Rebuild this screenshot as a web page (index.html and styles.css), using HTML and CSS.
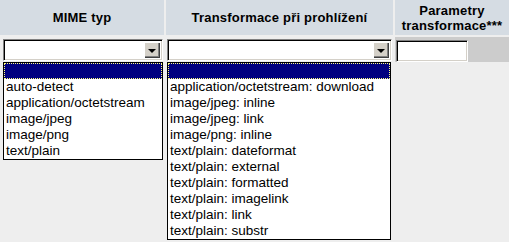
FILE: index.html
```html
<!DOCTYPE html>
<html lang="cs">
<head>
  <meta charset="UTF-8" />
  <title>Transformace</title>
  <link rel="stylesheet" href="styles.css">
</head>
<body>
  <div class="grid">
    <div class="head">MIME typ</div>
    <div class="head">Transformace při prohlížení</div>
    <div class="head two">Parametry<br />transformace***</div>

    <div class="cell">
      <div class="combo mime">
        <div class="field"></div>
        <div class="arrow"><span></span></div>
      </div>
    </div>
    <div class="cell mid">
      <div class="combo trans">
        <div class="field"></div>
        <div class="arrow"><span></span></div>
      </div>
    </div>
    <div class="cell alt">
      <input class="param" type="text" />
    </div>

    <ul class="droplist mime-list">
      <li class="sel"></li>
      <li>auto-detect</li>
      <li>application/octetstream</li>
      <li>image/jpeg</li>
      <li>image/png</li>
      <li>text/plain</li>
    </ul>
    <ul class="droplist trans-list">
      <li class="sel"></li>
      <li>application/octetstream: download</li>
      <li>image/jpeg: inline</li>
      <li>image/jpeg: link</li>
      <li>image/png: inline</li>
      <li>text/plain: dateformat</li>
      <li>text/plain: external</li>
      <li>text/plain: formatted</li>
      <li>text/plain: imagelink</li>
      <li>text/plain: link</li>
      <li>text/plain: substr</li>
    </ul>
  </div>
</body>
</html>
```

FILE: styles.css
```css
body {
  margin: 0;
  background-color: #eeeeee;
  font-family: "Liberation Sans", Arial, sans-serif;
  font-size: 13px;
  color: #000;
}
.grid {
  display: grid;
  grid-template-columns: 164px 227px 114px;
  grid-template-rows: 37px 25px auto;
  column-gap: 2px;
  width: 509px;
  align-items: start;
}
.head {
  height: 35px;
  background-color: #d5dce3;
  font-weight: bold;
  font-size: 13px;
  letter-spacing: 0.2px;
  display: flex;
  align-items: center;
  justify-content: center;
  text-align: center;
  line-height: 15px;
}
.head.two {
  padding-top: 1px;
  box-sizing: border-box;
}
.cell {
  height: 25px;
  box-sizing: border-box;
  padding: 2px 0 0 3px;
}
.cell.mid {
  padding-left: 1px;
}
.cell.alt {
  background-color: #cccccc;
  padding: 3px 0 0 1px;
}
.combo {
  display: flex;
  height: 22px;
  box-sizing: border-box;
  border-top: 1px solid #808080;
  border-left: 1px solid #808080;
  border-right: 1px solid #ffffff;
  border-bottom: 1px solid #ffffff;
  box-shadow: inset 1px 1px 0 #000, inset -1px -1px 0 #d4d0c8;
  background-color: #fff;
  padding: 2px;
}
.combo.mime {
  width: 160px;
}
.combo.trans {
  width: 225px;
}
.field {
  flex: 1;
}
.arrow {
  width: 16px;
  background-color: #d4d0c8;
  box-shadow: inset 1px 1px 0 #ffffff, inset -1px -1px 0 #404040, inset -2px -2px 0 #808080;
  display: flex;
  align-items: center;
  justify-content: center;
}
.arrow span {
  width: 0;
  height: 0;
  border-left: 4px solid transparent;
  border-right: 4px solid transparent;
  border-top: 4px solid #000;
  margin-top: 1px;
}
.droplist {
  margin: 0 0 0 3px;
  padding: 0;
  list-style: none;
  background-color: #fff;
  border: 1px solid #000;
}
.mime-list {
  width: 158px;
}
.trans-list {
  margin-left: 1px;
  width: 222px;
}
.droplist li {
  height: 16px;
  line-height: 16px;
  padding-left: 2px;
  white-space: nowrap;
  font-size: 13.5px;
}
.droplist li.sel {
  background-color: #000080;
  outline: 1px dotted #ffff80;
  outline-offset: -1px;
}
.param {
  width: 72px;
  height: 22px;
  box-sizing: border-box;
  margin: 0;
  padding: 0 2px;
  border-top: 1px solid #808080;
  border-left: 1px solid #808080;
  border-right: 1px solid #ffffff;
  border-bottom: 1px solid #ffffff;
  box-shadow: inset 1px 1px 0 #000, inset -1px -1px 0 #d4d0c8;
  background-color: #fff;
}
```
